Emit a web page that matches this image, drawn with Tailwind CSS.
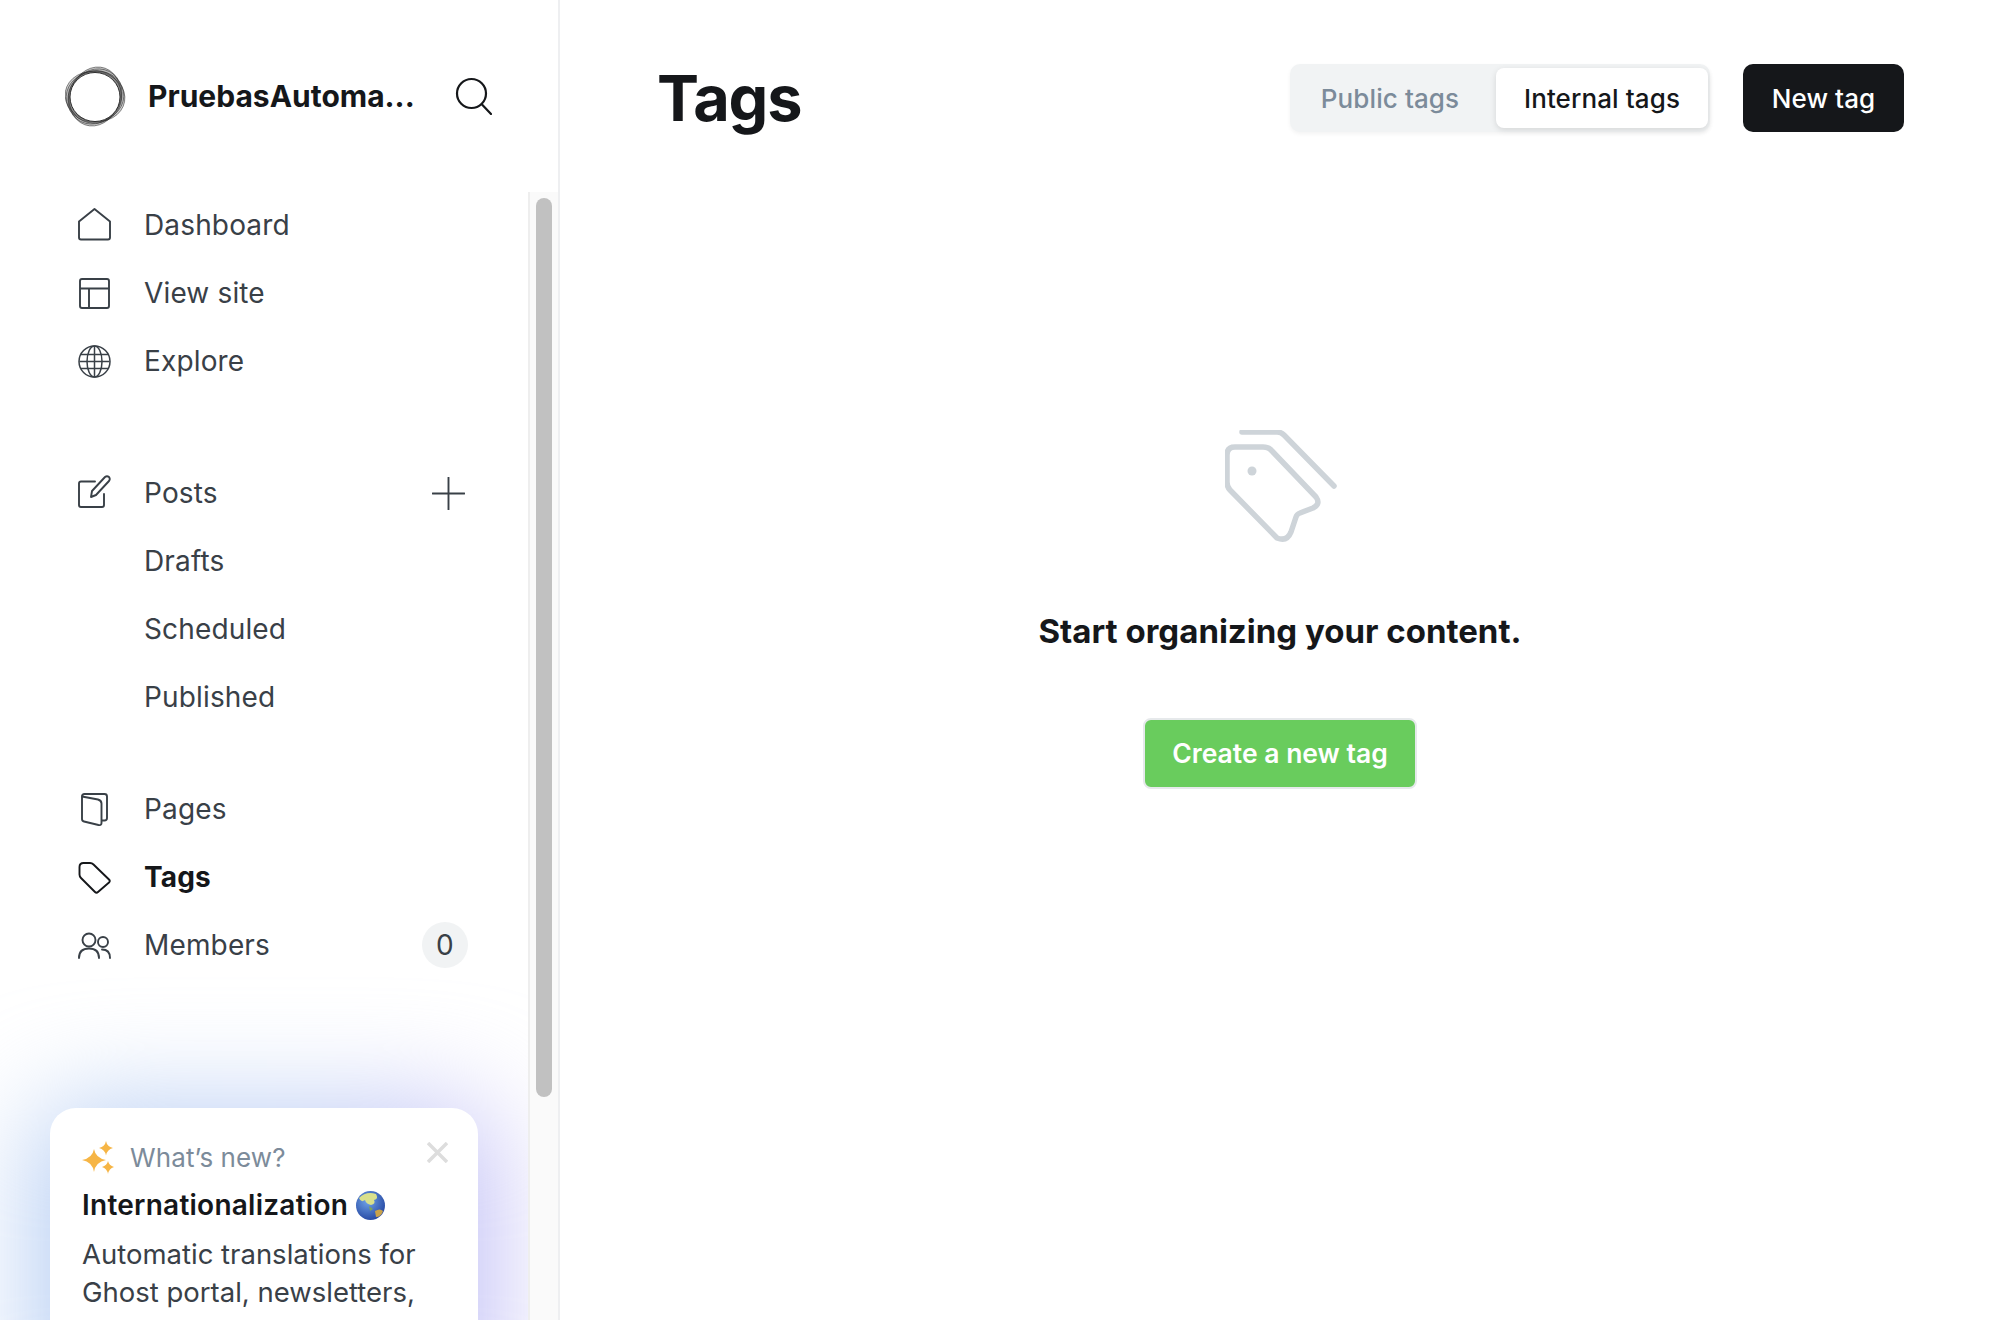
<!DOCTYPE html>
<html>
<head>
<meta charset="utf-8">
<script src="https://cdn.jsdelivr.net/npm/@tailwindcss/browser@4"></script>
</head>
<body class="font-['Inter',sans-serif] bg-white text-[#15171a]">
<div class="flex h-[1320px] w-[2000px] overflow-hidden">
  <aside class="w-[560px] shrink-0 border-r-2 border-[#eeeff1] flex flex-col overflow-hidden">
    <header class="h-[192px] shrink-0 flex items-center pl-[65px]">
      <svg class="w-[61px] h-[61px] shrink-0" viewBox="0 0 61 61" fill="#666" stroke="#222" stroke-width=".5">
        <ellipse cx="30" cy="30.500" rx="30" ry="25" transform="rotate(-70 30 30.500)" fill-opacity=".3"/>
        <ellipse cx="30" cy="30.500" rx="30" ry="25" transform="rotate(10 30 30.500)" fill-opacity=".3"/>
        <ellipse cx="30" cy="30.500" rx="29" ry="25.500" transform="rotate(-50 30 30.500)" fill-opacity=".2"/>
        <ellipse cx="30" cy="30.500" rx="29" ry="25.500" transform="rotate(-10 30 30.500)" fill-opacity=".2"/>
        <ellipse cx="30" cy="31" rx="27" ry="26" transform="rotate(-30 30 31)" fill-opacity=".25"/>
        <ellipse cx="30" cy="31" rx="25" ry="24.500" fill="#ffffff" fill-opacity="1" stroke="#1c1c1c" stroke-width=".9"/>
      </svg>
      <span class="ml-[22px] w-[267px] text-[30px] font-bold whitespace-nowrap">PruebasAutoma...</span>
      <svg class="ml-[40px] w-[37px] h-[38px]" viewBox="0 0 37 38" fill="none" stroke="#15171a" stroke-width="2.200" stroke-linecap="round"><circle cx="16.500" cy="16.500" r="14.500"/><path d="M27 27.500L36 37"/></svg>
    </header>
    <div class="flex-1 flex min-h-0">
      <div class="w-[528px] shrink-0 relative overflow-hidden">
        <div class="absolute left-[34px] top-[916px] w-[460px] h-[320px] rounded-[40px] blur-[55px] bg-gradient-to-r from-[#b4cdf3] via-[#b9ccf4] via-60% to-[#c3baf6]"></div>
        <nav class="relative -mt-px text-[28px] tracking-[0.15px] text-[#394047]">
          <ul class="mb-[64px]">
            <li class="h-[68px] flex items-center pl-[78px] gap-[33px]">
              <svg class="w-[33px] h-[33px] -translate-y-[1px]" viewBox="0 0 33 33" fill="none" stroke="#394047" stroke-width="1.900" stroke-linejoin="round"><path d="M16.500 1L1 13.500V29.500Q1 31.500 3 31.500H30Q32 31.500 32 29.500V13.500Z"/></svg>
              <span>Dashboard</span>
            </li>
            <li class="h-[68px] flex items-center pl-[78px] gap-[33px]">
              <svg class="w-[33px] h-[33px]" viewBox="0 0 33 33" fill="none" stroke="#394047" stroke-width="1.900" stroke-linejoin="round"><rect x="2" y="2" width="29" height="29" rx="2"/><path d="M2 11.500H31M11 11.500V31"/></svg>
              <span>View site</span>
            </li>
            <li class="h-[68px] flex items-center pl-[78px] gap-[33px]">
              <svg class="w-[33px] h-[33px]" viewBox="0 0 33 33" fill="none" stroke="#394047" stroke-width="1.500"><circle cx="16.500" cy="16.500" r="15.500"/><ellipse cx="16.500" cy="16.500" rx="7.500" ry="15.500"/><path d="M16.500 1V32M3 9.500H30M1.500 16.500H31.500M3 23.500H30"/></svg>
              <span>Explore</span>
            </li>
          </ul>
          <ul class="mb-[44px]">
            <li class="h-[68px] flex items-center pl-[78px] gap-[33px]">
              <svg class="w-[33px] h-[33px] -translate-y-[2px]" viewBox="0 0 33 33" fill="none" stroke="#394047" stroke-width="1.900" stroke-linejoin="round" stroke-linecap="round"><path d="M17 6.500H3Q1 6.500 1 8.500V30Q1 32 3 32H24Q26 32 26 30V19"/><path d="M14 16L27 2Q29 0.500 31 2Q32.500 4 31 6L18 20L13 22Z"/></svg>
              <span>Posts</span>
              <svg class="ml-[181px] w-[33px] h-[33px]" viewBox="0 0 33 33" fill="none" stroke="#394047" stroke-width="1.900" stroke-linecap="round"><path d="M16.500 0.500V32.500M0.500 16.500H32.500"/></svg>
            </li>
            <li class="h-[68px] flex items-center pl-[144px]">Drafts</li>
            <li class="h-[68px] flex items-center pl-[144px]">Scheduled</li>
            <li class="h-[68px] flex items-center pl-[144px]">Published</li>
          </ul>
          <ul>
            <li class="h-[68px] flex items-center pl-[78px] gap-[33px]">
              <svg class="w-[33px] h-[33px]" viewBox="0 0 33 33" fill="none" stroke="#394047" stroke-width="1.900" stroke-linejoin="round"><path d="M4 3.500L20 6.500Q23.500 7.500 23.500 10.500V30Q23.500 32.500 20.500 32L6 28.500Q4 28 4 26Z"/><path d="M4 3.500Q4 1 6.500 1H26.500Q29 1 29 3.500V25Q29 27.500 26.500 27.500H23.500"/></svg>
              <span>Pages</span>
            </li>
            <li class="h-[68px] flex items-center pl-[78px] gap-[33px]">
              <svg class="w-[33px] h-[33px]" viewBox="0 0 33 33" fill="none" stroke="#15171a" stroke-width="1.900" stroke-linejoin="round"><path d="M1.500 6Q1.500 2 5.500 2H12Q14 2 15.500 3.500L31 18.500Q32.500 20 31 21.500L20 31Q18.500 32.500 17 31L3 17Q1.500 15.500 1.500 13.500Z"/></svg>
              <span class="font-bold text-[#15171a]">Tags</span>
            </li>
            <li class="h-[68px] flex items-center pl-[78px] gap-[33px]">
              <svg class="w-[33px] h-[33px]" viewBox="0 0 33 33" fill="none" stroke="#394047" stroke-width="1.900" stroke-linecap="round"><circle cx="11" cy="11" r="6.500"/><path d="M1 29C1 22 5 19.500 11 19.500C17 19.500 21 22 21 29"/><circle cx="25" cy="13" r="5"/><path d="M24 20.500C29 20.500 32 23.500 32 29"/></svg>
              <span>Members</span>
              <span class="ml-auto mr-[60px] w-[46px] h-[46px] rounded-full bg-[#f1f3f4] flex items-center justify-center text-[28px]">0</span>
            </li>
          </ul>
        </nav>
        <section class="relative mt-[129px] ml-[50px] w-[428px] h-[300px] rounded-t-[26px] bg-white pt-[32px] px-[32px]">
          <div class="flex items-center h-[34px]">
            <svg class="w-[33px] h-[33px] shrink-0" viewBox="0 0 33 33" fill="#f6b545"><path d="M12 8Q13.500 17 24 19Q13.500 21 12 31Q10.500 21 0 19Q10.500 17 12 8Z"/><path d="M24 0Q25 5.500 31 7Q25 8.500 24 14.500Q23 8.500 17 7Q23 5.500 24 0Z"/><path d="M26 20Q27 24.500 32 26Q27 27.500 26 33Q25 27.500 20 26Q25 24.500 26 20Z"/></svg>
            <span class="ml-[15px] text-[26px] tracking-[0.1px] text-[#7c8b9a]">What’s new?</span>
            <svg class="ml-auto mr-[-2px] mt-[-10px] w-[21px] h-[21px]" viewBox="0 0 21 21" fill="none" stroke="#dddddd" stroke-width="3.500"><path d="M1 1L20 20M20 1L1 20"/></svg>
          </div>
          <div class="mt-[12px] flex items-center text-[28px] tracking-[0.25px] font-semibold whitespace-nowrap leading-[38px]">
            Internationalization
            <svg class="ml-[8px] w-[29px] h-[29px]" viewBox="0 0 29 29"><defs><radialGradient id="g" cx="40%" cy="35%" r="75%"><stop offset="0" stop-color="#6fa3e8"/><stop offset="1" stop-color="#1f3f9c"/></radialGradient></defs><circle cx="14.500" cy="14.500" r="14.500" fill="url(#g)"/><path d="M3 7Q10 0 20 3Q23 8 18 9Q20 13 15 14Q10 13 9 9Q5 12 3 7Z" fill="#d9e08c"/><path d="M19 20Q24 17 27 20Q25 26 20 26Z" fill="#c9a24a"/><path d="M13 15L17 18L14 20Z" fill="#7ea35b"/></svg>
          </div>
          <p class="mt-[11px] text-[27.500px] leading-[38px] text-[#394047] w-[380px]">Automatic translations for<br>Ghost portal, newsletters,</p>
        </section>
      </div>
      <div class="w-[30px] shrink-0 bg-[#fafafa] border-l-2 border-[#eeeeee] pl-[6px] pr-[6px] pt-[6px]">
        <div class="h-[899px] rounded-full bg-[#c1c1c1]"></div>
      </div>
    </div>
  </aside>
  <main class="flex-1 min-w-0 flex flex-col">
    <header class="h-[192px] shrink-0 pl-[97px] pr-[96px] pt-[64px] flex items-start">
      <h1 class="text-[63px] leading-[68px] font-bold tracking-[-1.200px]">Tags</h1>
      <div class="ml-auto flex h-[68px] w-[420px] rounded-[10px] bg-[#f1f3f4] p-[4px] pr-[2px] text-[26px] tracking-[0.1px] font-medium shadow-[0_2px_4px_rgba(0,0,0,0.05)]">
        <span class="flex-1 flex items-center justify-center text-[#7c8b9a] pr-[10px]">Public tags</span>
        <span class="w-[212px] flex items-center justify-center rounded-[8px] bg-white shadow-[0_2px_6px_rgba(0,0,0,0.12)]">Internal tags</span>
      </div>
      <button class="ml-[33px] w-[161px] h-[68px] rounded-[10px] bg-[#15171a] text-white text-[26px] tracking-[0.1px] font-medium">New tag</button>
    </header>
    <div class="flex flex-col items-center pt-[238px]">
      <svg class="w-[112px] h-[112px] translate-x-[1px]" viewBox="224 30 112 112" fill="none" stroke="#ced4d9" stroke-width="5.500" stroke-linecap="round" stroke-linejoin="round"><path d="M241 32H276Q280 32 283 35L333 86"/><path d="M226 55Q226 47 234 47H262Q268 47 271 51L315 97Q320 104 312 108L299 113Q296 114 295 117L290 132Q286 142 276 138L229 90Q226 87 226 82Z"/><circle cx="251" cy="71" r="4.500" fill="#ced4d9" stroke="none"/></svg>
      <h2 class="mt-[67px] text-[33px] leading-[44px] font-bold">Start organizing your content.</h2>
      <button class="mt-[65px] w-[274px] h-[71px] rounded-[8px] bg-[#69cc5d] border-2 border-[#e6e9eb] text-white text-[26.500px] font-semibold">Create a new tag</button>
    </div>
  </main>
</div>
</body>
</html>
